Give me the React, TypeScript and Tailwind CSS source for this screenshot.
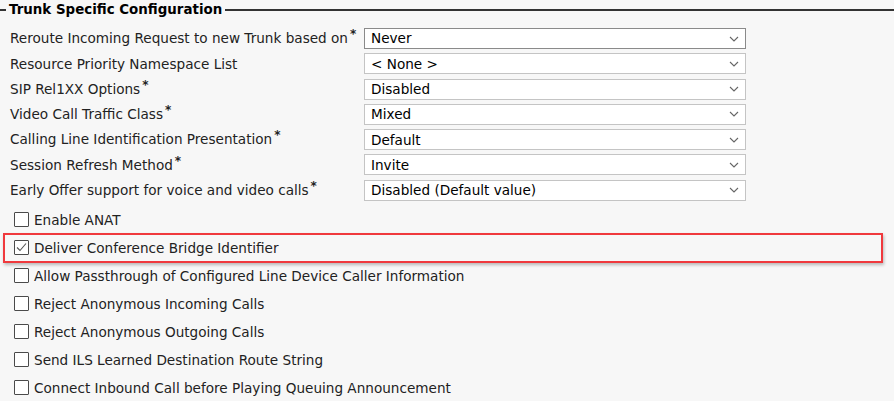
import React from 'react';

const selects = [
  { label: 'Reroute Incoming Request to new Trunk based on', req: true, value: 'Never', focus: true },
  { label: 'Resource Priority Namespace List', req: false, value: '< None >' },
  { label: 'SIP Rel1XX Options', req: true, value: 'Disabled' },
  { label: 'Video Call Traffic Class', req: true, value: 'Mixed' },
  { label: 'Calling Line Identification Presentation', req: true, value: 'Default' },
  { label: 'Session Refresh Method', req: true, value: 'Invite' },
  { label: 'Early Offer support for voice and video calls', req: true, value: 'Disabled (Default value)' },
];

const checks = [
  { label: 'Enable ANAT', checked: false },
  { label: 'Deliver Conference Bridge Identifier', checked: true, marked: true },
  { label: 'Allow Passthrough of Configured Line Device Caller Information', checked: false },
  { label: 'Reject Anonymous Incoming Calls', checked: false },
  { label: 'Reject Anonymous Outgoing Calls', checked: false },
  { label: 'Send ILS Learned Destination Route String', checked: false },
  { label: 'Connect Inbound Call before Playing Queuing Announcement', checked: false },
];

const Chevron = () => (
  <svg width="10" height="6" viewBox="0 0 10 6" className="shrink-0">
    <path d="M1 1 L5 5 L9 1" fill="none" stroke="#666" strokeWidth="1.1" />
  </svg>
);

const Box = ({ checked }: { checked: boolean }) => (
  <span className="flex h-[15px] w-[15px] shrink-0 items-center justify-center rounded-[1px] border border-[#4a4a4a] bg-white">
    {checked && (
      <svg width="13" height="13" viewBox="0 0 13 13">
        <path d="M2 6.5 L5 9.5 L11 2.5" fill="none" stroke="#555" strokeWidth="1.1" />
      </svg>
    )}
  </span>
);

export default function App() {
  return (
    <div className="h-[401px] w-[894px] overflow-hidden bg-[#f7f7f7] text-[13.6px] text-[#222]" style={{ fontFamily: '"DejaVu Sans", Verdana, sans-serif' }}>
      <div className="flex h-[20px] items-center">
        <div className="h-[2px] w-[6px] bg-[#333]" />
        <div className="px-[3px] text-[13.4px] font-bold leading-none text-black">Trunk Specific Configuration</div>
        <div className="h-[2px] flex-1 bg-[#333]" />
      </div>

      <div className="mt-[8px] flex flex-col gap-[4.3px] pl-[10px]">
        {selects.map((s) => (
          <div key={s.label} className="flex h-[21px] items-center">
            <div className="w-[354px] shrink-0 whitespace-nowrap">
              {s.label}
              {s.req && <span className="relative -top-[5px] ml-[2px] text-[12px] font-bold">*</span>}
            </div>
            <div
              className={
                'flex h-[21px] w-[382px] items-center justify-between bg-white pl-[6px] pr-[6px] ' +
                (s.focus ? 'border border-[#8a8a8a]' : 'border border-[#c4c4c4]')
              }
            >
              <span className="whitespace-nowrap text-black">{s.value}</span>
              <Chevron />
            </div>
          </div>
        ))}
      </div>

      <div className="mt-[5px] flex flex-col">
        {checks.map((c) => (
          <div key={c.label} className="relative flex h-[28px] items-center pl-[14px]">
            {c.marked && (
              <span className="pointer-events-none absolute left-[3px] top-[-1px] h-[30px] w-[880px] border-2 border-[#f0393d] shadow-[1px_2px_3px_rgba(0,0,0,0.25)]" />
            )}
            <Box checked={c.checked} />
            <span className="ml-[5px] whitespace-nowrap">{c.label}</span>
          </div>
        ))}
      </div>
    </div>
  );
}
